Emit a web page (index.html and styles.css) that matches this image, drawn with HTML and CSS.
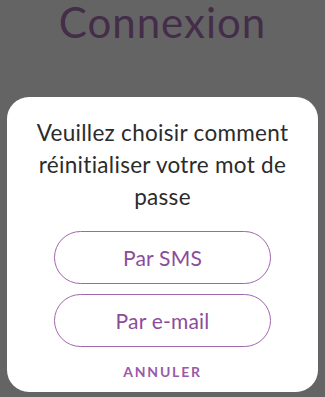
FILE: index.html
```html
<!DOCTYPE html>
<html lang="fr">
<head>
<meta charset="utf-8">
<link rel="stylesheet" href="styles.css">
</head>
<body>
<div class="screen">
  <h1 class="page-title">Connexion</h1>
  <p class="behind">Identifiant ou e-mail ?</p>
  <div class="overlay"></div>
  <div class="sheet">
    <p class="question">Veuillez choisir comment réinitialiser votre mot de passe</p>
    <button class="choice">Par SMS</button>
    <button class="choice">Par e-mail</button>
    <button class="cancel">ANNULER</button>
  </div>
</div>
</body>
</html>
```
FILE: styles.css
```css
html, body {
  margin: 0;
  padding: 0;
}
body {
  width: 325px;
  height: 397px;
  overflow: hidden;
  font-family: Lato, "Noto Sans", sans-serif;
}
.screen {
  position: relative;
  width: 325px;
  height: 397px;
  background: #ffffff;
  overflow: hidden;
}
.page-title {
  margin: 0;
  padding-top: 0;
  text-align: center;
  font-weight: 400;
  font-size: 42px;
  line-height: 44px;
  color: #8a3a9e;
  letter-spacing: 1px;
}
.behind {
  margin: 48px 0 0;
  text-align: center;
  font-size: 22px;
  color: #111;
}
.overlay {
  position: absolute;
  inset: 0;
  background: rgba(40, 40, 40, 0.72);
}
.sheet {
  position: absolute;
  left: 7px;
  top: 97px;
  width: 311px;
  height: 295px;
  background: #ffffff;
  border-radius: 22px;
  display: flex;
  flex-direction: column;
  align-items: center;
  box-sizing: border-box;
  padding-top: 20px;
}
.question {
  margin: 0 0 18px;
  width: 290px;
  text-align: center;
  font-size: 22.5px;
  letter-spacing: 0.3px;
  line-height: 32px;
  color: #2b2b2b;
}
.choice {
  width: 217px;
  height: 53px;
  margin-bottom: 10px;
  border: 1.5px solid #a066ae;
  border-radius: 27px;
  background: #ffffff;
  font-family: inherit;
  font-size: 21px;
  letter-spacing: 0.2px;
  color: #8b4d9b;
  padding: 0;
}
.cancel {
  margin-top: 6px;
  border: 0;
  background: none;
  padding: 0;
  font-family: inherit;
  font-weight: 700;
  font-size: 14px;
  letter-spacing: 1.8px;
  color: #9a5aa8;
}
```
